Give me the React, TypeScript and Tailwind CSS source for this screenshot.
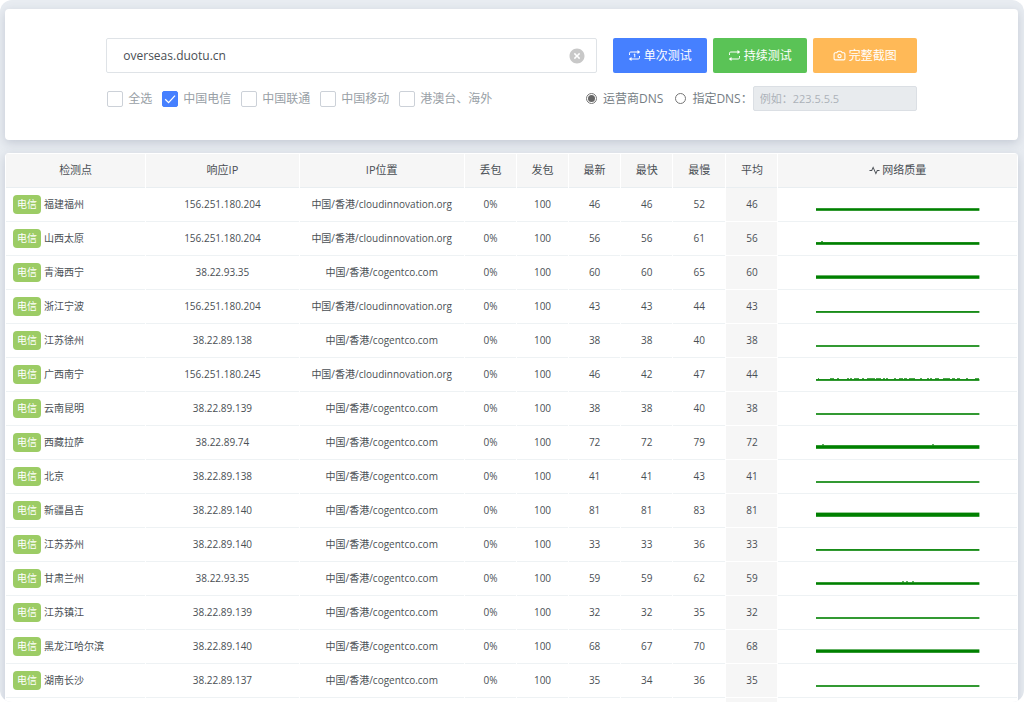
import { useState } from 'react';

//icon imports
import { Camera } from 'lucide-react';
import { RiPulseLine, RiCloseCircleFill } from 'react-icons/ri';

type NodeResult = {
    name: string;
    ip: string;
    location: string;
    last: number;
    best: number;
    worst: number;
    avg: number;
    // thickness of the quality graph and where it shows small peaks
    level: number;
    peaks?: number[][];
}

const CLOUD = "中国/香港/cloudinnovation.org";
const COGENT = "中国/香港/cogentco.com";

const results: NodeResult[] = [
    { name: "福建福州", ip: "156.251.180.204", location: CLOUD, last: 46, best: 46, worst: 52, avg: 46, level: 2.6 },
    { name: "山西太原", ip: "156.251.180.204", location: CLOUD, last: 56, best: 56, worst: 61, avg: 56, level: 2.7, peaks: [[5, 2]] },
    { name: "青海西宁", ip: "38.22.93.35", location: COGENT, last: 60, best: 60, worst: 65, avg: 60, level: 3.4 },
    { name: "浙江宁波", ip: "156.251.180.204", location: CLOUD, last: 43, best: 43, worst: 44, avg: 43, level: 1.7 },
    { name: "江苏徐州", ip: "38.22.89.138", location: COGENT, last: 38, best: 38, worst: 40, avg: 38, level: 1.6 },
    {
        name: "广西南宁", ip: "156.251.180.245", location: CLOUD, last: 46, best: 42, worst: 47, avg: 44, level: 1.7,
        peaks: [[2, 1], [14, 4], [21, 2], [31, 2], [34, 2], [38, 5], [46, 2], [51, 8], [60, 5], [67, 2], [70, 2], [78, 2], [83, 4], [88, 3], [93, 6], [104, 2], [111, 2], [114, 2], [119, 4], [127, 7], [136, 3], [141, 3], [150, 2], [159, 4]],
    },
    { name: "云南昆明", ip: "38.22.89.139", location: COGENT, last: 38, best: 38, worst: 40, avg: 38, level: 1.6 },
    { name: "西藏拉萨", ip: "38.22.89.74", location: COGENT, last: 72, best: 72, worst: 79, avg: 72, level: 3.6, peaks: [[6, 2], [116, 2]] },
    { name: "北京", ip: "38.22.89.138", location: COGENT, last: 41, best: 41, worst: 43, avg: 41, level: 1.6 },
    { name: "新疆昌吉", ip: "38.22.89.140", location: COGENT, last: 81, best: 81, worst: 83, avg: 81, level: 4.2 },
    { name: "江苏苏州", ip: "38.22.89.140", location: COGENT, last: 33, best: 33, worst: 36, avg: 33, level: 1.7 },
    { name: "甘肃兰州", ip: "38.22.93.35", location: COGENT, last: 59, best: 59, worst: 62, avg: 59, level: 2.6, peaks: [[86, 2], [90, 2], [96, 2]] },
    { name: "江苏镇江", ip: "38.22.89.139", location: COGENT, last: 32, best: 32, worst: 35, avg: 32, level: 1.6 },
    { name: "黑龙江哈尔滨", ip: "38.22.89.140", location: COGENT, last: 68, best: 67, worst: 70, avg: 68, level: 3.4 },
    { name: "湖南长沙", ip: "38.22.89.137", location: COGENT, last: 35, best: 34, worst: 36, avg: 35, level: 1.6 },
];

const carriers = ["全选", "中国电信", "中国联通", "中国移动", "港澳台、海外"];

function App() {
    return <div className={`h-screen overflow-hidden rounded-xl bg-[#e8ecf1] pt-[9px] pl-[5px] pr-[6px] font-["Open_Sans","Noto_Sans_CJK_SC",sans-serif] text-[#4a4f55]`}>
        <SearchPanel />
        <ResultTable />
    </div>
}

function SearchPanel() {
    const [host, setHost] = useState("overseas.duotu.cn");
    const [selected, setSelected] = useState<string[]>(["中国电信"]);
    const [dnsMode, setDnsMode] = useState("isp");

    function toggle(name: string) {
        setSelected(selected.includes(name) ? selected.filter(s => s !== name) : [...selected, name]);
    }

    return <form className="rounded-sm bg-white px-[10%] pt-[29px] pb-[29px] shadow-[0_3px_10px_rgba(90,105,130,0.25)]" onSubmit={e => e.preventDefault()}>
        <div className="flex items-center gap-4">
            <div className="flex h-[35px] flex-1 items-center rounded-xs border border-[#dfe3e7] px-[10px]">
                <input aria-label="域名" value={host} onChange={e => setHost(e.target.value)}
                    className="min-w-0 flex-1 bg-transparent pl-[6px] text-xs outline-none" />
                <button type="button" aria-label="清除" onClick={() => setHost("")}>
                    <RiCloseCircleFill className="size-[18px] text-[#c8c8c8]" />
                </button>
            </div>
            <div className="flex gap-[6px] text-xs text-white">
                <button className="flex h-[35px] items-center gap-[3px] rounded-xs bg-[#4680ff] px-[15px]">
                    <RepeatIcon once />单次测试
                </button>
                <button className="flex h-[35px] items-center gap-[3px] rounded-xs bg-[#5ac356] px-[15px]">
                    <RepeatIcon />持续测试
                </button>
                <button className="flex h-[35px] items-center gap-[3px] rounded-xs bg-[#ffb957] px-5">
                    <Camera className="size-[13px]" />完整截图
                </button>
            </div>
        </div>

        <div className="mt-[13px] flex items-center justify-between text-xs">
            <div className="flex gap-[10px] pl-px text-[#98a0a6]">
                {carriers.map(name =>
                    <label key={name} className="flex items-center gap-[5px]">
                        <span className="relative size-4">
                            <input type="checkbox" checked={selected.includes(name)} onChange={() => toggle(name)}
                                className="peer block size-4 appearance-none rounded-xs border border-[#ccd1d8] bg-white checked:border-[#4680ff] checked:bg-[#4680ff]" />
                            <svg viewBox="0 0 16 16" className="pointer-events-none absolute inset-0 hidden size-4 peer-checked:block" fill="none" stroke="white" strokeWidth="1.3">
                                <path d="M3.2 8.2 6.6 11.6 13 4.6" />
                            </svg>
                        </span>
                        {name}
                    </label>
                )}
            </div>
            <div className="flex items-center text-[#757d84]">
                <DnsRadio label="运营商DNS" checked={dnsMode === "isp"} onSelect={() => setDnsMode("isp")} />
                <DnsRadio label="指定DNS：" checked={dnsMode === "custom"} onSelect={() => setDnsMode("custom")} />
                <input aria-label="DNS" placeholder="例如：223.5.5.5" disabled={dnsMode === "isp"}
                    className="h-[25px] w-[164px] rounded-xs border border-[#dbdfe4] px-[6px] text-[11px] outline-none placeholder:text-[#acb2b9] disabled:bg-[#e8ebee]" />
            </div>
        </div>
    </form>
}

function RepeatIcon({ once = false }: { once?: boolean }) {
    return <svg viewBox="0 0 26 26" className="size-[13px]" fill="none" stroke="currentColor" strokeWidth="2">
        <path d="M3 12V8.5A2.5 2.5 0 0 1 5.500 6H21M23 14v3.500A2.5 2.5 0 0 1 20.500 20H5" />
        <path d="M19 2l5.500 4L19 10zM7 16l-5.500 4L7 24z" fill="currentColor" stroke="none" />
        {once && <path d="M11.500 11 13.500 10v6.500" />}
    </svg>
}

type DnsRadioProps = {
    label: string;
    checked: boolean;
    onSelect: () => void;
}
function DnsRadio({ label, checked, onSelect }: DnsRadioProps) {
    return <label className="flex items-center gap-[6px] first:mr-3">
        <input type="radio" name="dns" checked={checked} onChange={onSelect}
            className="size-[11px] appearance-none rounded-full border border-[#767676] bg-white bg-clip-content p-px checked:bg-[#666]" />
        <span>{label}</span>
    </label>
}

function ResultTable() {
    const td = "h-[34px] border-b p-0";
    const line = "border-[#eef2f4]";
    const th = "h-[34px] border-b border-[#e9eef1] bg-[#f6f6f6] p-0 text-[11px] font-normal";

    return <div className="mt-[13px] rounded-sm bg-white pt-px shadow-[0_3px_10px_rgba(90,105,130,0.25)]">
        <table className="w-full table-fixed border-separate border-spacing-x-px border-spacing-y-0 text-center text-[10px]">
            <thead>
                <tr>
                    <th className={`${th} w-[13.9%]`}>检测点</th>
                    <th className={`${th} w-[15.2%]`}>响应IP</th>
                    <th className={`${th} w-[16.4%]`}>IP位置</th>
                    <th className={`${th} w-[5.1%]`}>丢包</th>
                    <th className={`${th} w-[5.1%]`}>发包</th>
                    <th className={`${th} w-[5.1%]`}>最新</th>
                    <th className={`${th} w-[5.1%]`}>最快</th>
                    <th className={`${th} w-[5.2%]`}>最慢</th>
                    <th className={`${th} w-[5.1%]`}>平均</th>
                    <th className={th}>
                        <span className="flex items-center justify-center gap-[2px]">
                            <RiPulseLine className="size-[11px]" />网络质量
                        </span>
                    </th>
                </tr>
            </thead>
            <tbody>
                {results.map(r =>
                    <tr key={r.name}>
                        <td className={`${td} ${line}`}>
                            <div className="flex items-center gap-[3px] pl-[7px]">
                                <span className="rounded-sm bg-[#9ccc65] px-1 leading-[19px] text-white">电信</span>
                                {r.name}
                            </div>
                        </td>
                        <td className={`${td} ${line}`}>{r.ip}</td>
                        <td className={`${td} ${line}`}>{r.location}</td>
                        <td className={`${td} ${line}`}>0%</td>
                        <td className={`${td} ${line}`}>100</td>
                        <td className={`${td} ${line}`}>{r.last}</td>
                        <td className={`${td} ${line}`}>{r.best}</td>
                        <td className={`${td} ${line}`}>{r.worst}</td>
                        <td className={`${td} border-white bg-[#f6f6f6]`}>{r.avg}</td>
                        <td className={`${td} ${line}`}><QualityGraph level={r.level} peaks={r.peaks} /></td>
                    </tr>
                )}
                <tr>
                    <td className={`${td} ${line}`} colSpan={8}></td>
                    <td className={`${td} border-white bg-[#f6f6f6]`}></td>
                    <td className={`${td} ${line}`}></td>
                </tr>
            </tbody>
        </table>
    </div>
}

type QualityGraphProps = {
    level: number;
    peaks?: number[][];
}
function QualityGraph({ level, peaks = [] }: QualityGraphProps) {
    return <svg width="164" height="24" viewBox="0 0 164 24" className="mx-auto" fill="green">
        <rect x="0" y={17.8 - level} width="163.4" height={level} />
        {peaks.map(([x, width]) => <rect key={x} x={x} y={17 - level} width={width} height="0.9" />)}
    </svg>
}

export default App;
